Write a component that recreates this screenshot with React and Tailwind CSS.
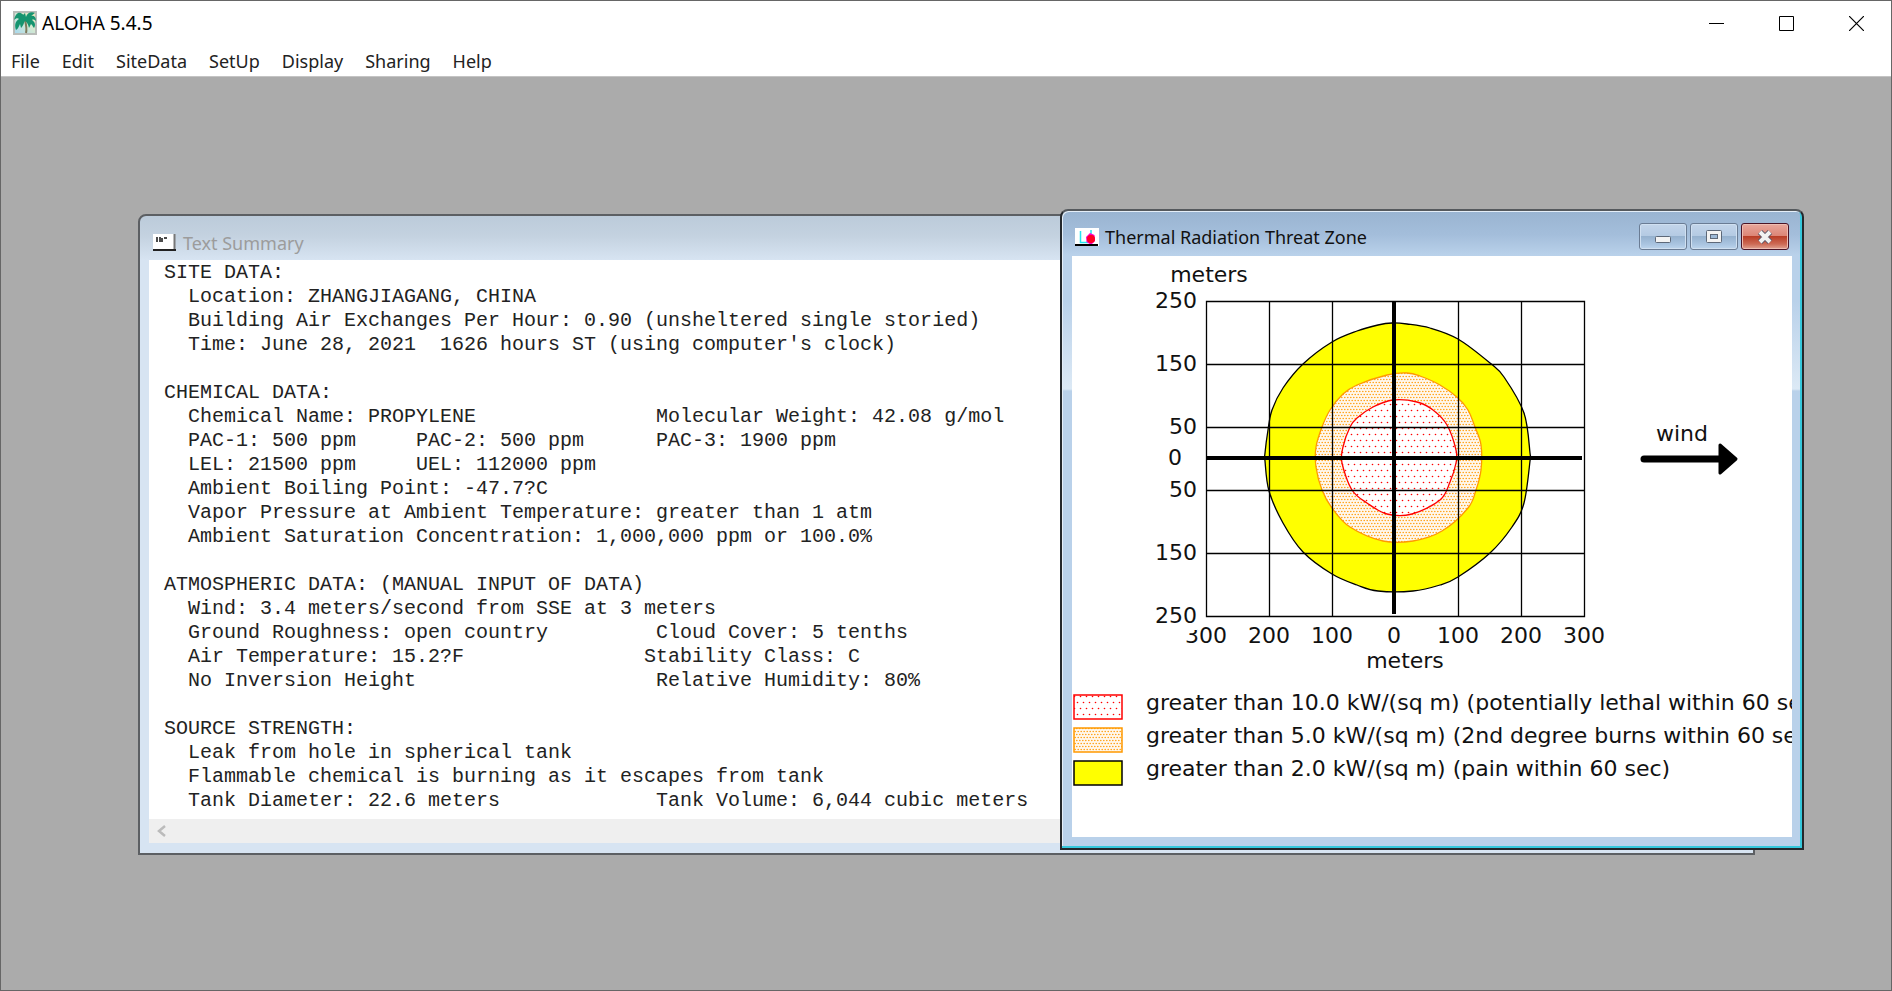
import React from "react";

const MENU = ["File", "Edit", "SiteData", "SetUp", "Display", "Sharing", "Help"];

const pad = (text, column) => text.padEnd(column, " ");

const SUMMARY = [
  "SITE DATA:",
  "  Location: ZHANGJIAGANG, CHINA",
  "  Building Air Exchanges Per Hour: 0.90 (unsheltered single storied)",
  "  Time: June 28, 2021  1626 hours ST (using computer's clock)",
  "",
  "CHEMICAL DATA:",
  pad("  Chemical Name: PROPYLENE", 41) + "Molecular Weight: 42.08 g/mol",
  pad(pad("  PAC-1: 500 ppm", 21) + "PAC-2: 500 ppm", 41) + "PAC-3: 1900 ppm",
  pad("  LEL: 21500 ppm", 21) + "UEL: 112000 ppm",
  "  Ambient Boiling Point: -47.7?C",
  "  Vapor Pressure at Ambient Temperature: greater than 1 atm",
  "  Ambient Saturation Concentration: 1,000,000 ppm or 100.0%",
  "",
  "ATMOSPHERIC DATA: (MANUAL INPUT OF DATA)",
  "  Wind: 3.4 meters/second from SSE at 3 meters",
  pad("  Ground Roughness: open country", 41) + "Cloud Cover: 5 tenths",
  pad("  Air Temperature: 15.2?F", 40) + "Stability Class: C",
  pad("  No Inversion Height", 41) + "Relative Humidity: 80%",
  "",
  "SOURCE STRENGTH:",
  "  Leak from hole in spherical tank",
  "  Flammable chemical is burning as it escapes from tank",
  pad("  Tank Diameter: 22.6 meters", 41) + "Tank Volume: 6,044 cubic meters",
].join("\n");

const LEGEND = [
  { fill: "url(#redDots)", stroke: "#ff0000", text: "greater than 10.0 kW/(sq m) (potentially lethal within 60 sec)" },
  { fill: "url(#orangeDots)", stroke: "#ff9900", text: "greater than 5.0 kW/(sq m) (2nd degree burns within 60 sec)" },
  { fill: "#ffff00", stroke: "#000000", text: "greater than 2.0 kW/(sq m) (pain within 60 sec)" },
];

function PalmIcon() {
  return (
    <svg width="24" height="24" viewBox="0 0 24 24" aria-hidden="true">
      <defs>
        <linearGradient id="sky" x1="0" y1="1" x2="1" y2="0">
          <stop offset="0" stopColor="#a5d8f0" />
          <stop offset="0.6" stopColor="#d9ebcf" />
          <stop offset="1" stopColor="#f0e3b8" />
        </linearGradient>
      </defs>
      <rect x="1" y="1" width="22" height="22" fill="url(#sky)" stroke="#b9bdb9" strokeWidth="2" />
      <path d="M12 9 C13 13 14 18 13 22" fill="none" stroke="#7d7a5c" strokeWidth="2" />
      <path
        d="M12 7 C11 4 8 1 5 2 C3 3 2 5 1 9 C3 7 5 7 6 8 C3 10 1 13 3 19 C5 18 6 15 7 13 L8 17 C11 14 11 11 12 10 C14 11 15 13 16 17 L18 13 C20 15 20 16 21 17 C23 14 22 11 19 9 C20 8 22 9 23 10 C23 6 21 4 18 5 L22 2 C18 0 14 2 13 6 L12 2 L10 4 Z"
        fill="#16946f"
      />
    </svg>
  );
}

function SummaryIcon() {
  return (
    <svg width="24" height="18" viewBox="0 0 24 18" aria-hidden="true">
      <rect width="22" height="15" fill="#fff" />
      <path d="M21.500 0V15" stroke="#777" strokeWidth="2" />
      <path d="M0 16H23" stroke="#222" strokeWidth="2" />
      <path d="M4 3V8M7 3V8M9 4V8M11 4H14" stroke="#111" strokeWidth="1.500" fill="none" />
    </svg>
  );
}

function ZoneIcon() {
  return (
    <svg width="24" height="18" viewBox="0 0 24 18" aria-hidden="true">
      <rect width="24" height="18" fill="#fff" />
      <path d="M5.500 3V14.500H13M16 2V6" stroke="#22e5f0" strokeWidth="1.500" fill="none" />
      <path d="M15 5L19.500 7L20 13L16 17L11.500 14L11 9Z" fill="#ff00c8" />
      <circle cx="16" cy="11" r="4" fill="#ff0022" />
      <path d="M0 17H23" stroke="#000" strokeWidth="2" />
    </svg>
  );
}

function CaptionButton({ label, danger, children }) {
  return (
    <button
      type="button"
      aria-label={label}
      className={
        danger
          ? "flex h-[27px] w-12 items-center justify-center rounded-[3px] border border-[#4a1426] bg-[linear-gradient(#e8a79c_0%,#dc8576_48%,#b93e27_50%,#cd6a55_80%,#e0a392_100%)] shadow-[inset_0_0_0_1px_#eebdb2]"
          : "flex h-[27px] w-12 items-center justify-center rounded-[3px] border border-[#6a7c94] bg-[linear-gradient(#c3d5ea_0%,#b4cae3_48%,#96b2cf_50%,#a9c4e0_80%,#bdd5ed_100%)] shadow-[inset_0_0_0_1px_#d0e0f1]"
      }
    >
      {children}
    </button>
  );
}

const X_LABELS = [[1206, "300"], [1269, "200"], [1332, "100"], [1394, "0"], [1458, "100"], [1521, "200"], [1584, "300"]];
const Y_LABELS = [[301, "250"], [364, "150"], [427, "50"], [458, "0"], [490, "50"], [553, "150"], [616, "250"]];

const YELLOW_ZONE = [
  [1392, 323], [1378, 325], [1357, 331], [1332, 342], [1303, 364], [1283, 388], [1272, 410], [1268, 430], [1265, 453], [1265, 461],
  [1269, 491], [1283, 523], [1303, 552], [1332, 574], [1357, 585], [1378, 591], [1413, 591], [1440, 585], [1458, 577], [1490, 553],
  [1512, 527], [1524, 503], [1530, 461], [1530, 453], [1524, 413], [1504, 377], [1490, 363], [1458, 339], [1430, 328], [1407, 324],
];
const ORANGE_ZONE = [
  [1407, 373], [1387, 375], [1357, 385], [1343, 394], [1330, 410], [1322, 427], [1316, 447], [1316, 467], [1322, 490], [1332, 508],
  [1350, 527], [1383, 541], [1413, 541], [1442, 531], [1468, 508], [1476, 490], [1481, 470], [1481, 445], [1475, 427], [1468, 410],
  [1458, 398], [1440, 385], [1420, 376],
];
const RED_ZONE = [
  [1393, 400], [1373, 407], [1357, 418], [1350, 427], [1343, 447], [1342, 463], [1352, 490], [1367, 503], [1387, 514], [1412, 514],
  [1440, 500], [1450, 482], [1456, 463], [1456, 450], [1447, 425], [1433, 410], [1417, 402],
];

// Closed Catmull-Rom curve through the contour points.
function contour(points) {
  const n = points.length;
  let d = `M${points[0].join(" ")}`;
  for (let i = 0; i < n; i += 1) {
    const [a, b, c, e] = [points[(i + n - 1) % n], points[i], points[(i + 1) % n], points[(i + 2) % n]];
    d += `C${b[0] + (c[0] - a[0]) / 6} ${b[1] + (c[1] - a[1]) / 6} ${c[0] - (e[0] - b[0]) / 6} ${c[1] - (e[1] - b[1]) / 6} ${c[0]} ${c[1]}`;
  }
  return `${d}Z`;
}

function ThreatChart() {
  return (
    <svg
      className="block h-[424px] w-[720px]"
      viewBox="1072 256 720 424"
      role="img"
      aria-label="Thermal radiation threat zone"
      fontFamily='"DejaVu Sans", sans-serif'
      fontSize="22"
      fill="#111"
    >
      <defs>
        <pattern id="redDots" width="6" height="12" patternUnits="userSpaceOnUse">
          <rect width="6" height="12" fill="#fff" />
          <circle cx="1.500" cy="2.500" r="0.800" fill="#ff0000" />
          <circle cx="4.500" cy="8.500" r="0.800" fill="#ff0000" />
        </pattern>
        <pattern id="orangeDots" width="3" height="6" patternUnits="userSpaceOnUse">
          <rect width="3" height="6" fill="#fff8ee" />
          <circle cx="0.800" cy="1.500" r="0.750" fill="#ff9900" />
          <circle cx="2.200" cy="4.500" r="0.750" fill="#ff9900" />
        </pattern>
      </defs>
      <path fill="#ffff00" stroke="#000" strokeWidth="1.300" d={contour(YELLOW_ZONE)} />
      <path fill="url(#orangeDots)" stroke="#ff9900" strokeWidth="1.300" d={contour(ORANGE_ZONE)} />
      <path fill="url(#redDots)" stroke="#ff0000" strokeWidth="1.300" d={contour(RED_ZONE)} />
      <path
        fill="none"
        stroke="#000"
        strokeWidth="1.300"
        d="M1206.500 301.500H1584.500V616.500H1206.500ZM1269.500 301V616M1332.500 301V616M1458.500 301V616M1521.500 301V616M1206 364.500H1584M1206 427.500H1584M1206 490.500H1584M1206 553.500H1584"
      />
      <path fill="none" stroke="#000" strokeWidth="4" d="M1394 302V614M1206 458H1582" />
      {X_LABELS.map(([x, label]) => (
        <text key={x} x={x} y="643" textAnchor="middle">{label}</text>
      ))}
      <rect x="1150" y="620" width="47" height="10" fill="#fff" />
      {Y_LABELS.map(([y, label]) => (
        <text key={y} x={label === "0" ? 1182 : 1197} y={y + 7} textAnchor="end">{label}</text>
      ))}
      <text x="1209" y="282" textAnchor="middle">meters</text>
      <text x="1405" y="668" textAnchor="middle">meters</text>
      <text x="1682" y="441" textAnchor="middle">wind</text>
      <path d="M1644 459H1722" stroke="#000" strokeWidth="7" strokeLinecap="round" />
      <path d="M1720 445L1736 459L1720 473Z" stroke="#000" strokeWidth="3" strokeLinejoin="round" fill="#000" />
    </svg>
  );
}

function SummaryWindow() {
  return (
    <section className="absolute top-[137px] left-[137px] flex w-[1617px] flex-col rounded-t-lg border-2 border-[#5c5f63] bg-[linear-gradient(#bccbda_0px,#c4d2e0_20px,#d7e4f2_44px)] px-[9px] pb-[10px]">
      <header className="flex h-11 items-center gap-[6px] px-1 pt-[10px]">
        <SummaryIcon />
        <h2 className="text-lg leading-6 text-[#9c9c9c]">Text Summary</h2>
      </header>
      <pre className="h-[559px] overflow-hidden bg-white pt-px pl-[15px] font-['Liberation_Mono',monospace] text-xl leading-6 text-[#222]">
        {SUMMARY}
      </pre>
      <div className="flex h-6 items-center bg-[#efefef] px-2">
        <button type="button" aria-label="Scroll left" className="flex">
          <svg width="9" height="12" viewBox="0 0 9 12" aria-hidden="true">
            <path d="M8 1L2 6L8 11" fill="none" stroke="#bbb" strokeWidth="2.500" />
          </svg>
        </button>
      </div>
    </section>
  );
}

function ThreatWindow() {
  return (
    <section className="absolute top-[132px] left-[1059px] flex w-[744px] flex-col rounded-t-lg border-2 border-[#24282c] border-t-[#55595d] bg-[linear-gradient(#99b4d1_0px,#a4bedb_24px,#b9d1ea_44px,#b9d1ea_90px,#dce9f5_178px,#b9d1ea_180px)] px-[10px] pb-[11px] shadow-[inset_-2px_-2px_0_#35c8dc,inset_1px_1px_0_#e4eef8]">
      <header className="flex h-[45px] items-center gap-[6px] px-[3px] pt-[6px]">
        <ZoneIcon />
        <h2 className="flex-1 text-lg leading-6 text-[#111]">Thermal Radiation Threat Zone</h2>
        <div className="flex gap-[3px]">
          <CaptionButton label="Minimize">
            <svg width="18" height="14" viewBox="0 0 18 14" aria-hidden="true">
              <rect x="1.500" y="6.500" width="15" height="6" rx="1" fill="#f3f3f3" stroke="#5d6878" />
            </svg>
          </CaptionButton>
          <CaptionButton label="Maximize">
            <svg width="18" height="16" viewBox="0 0 18 16" aria-hidden="true">
              <rect x="1.500" y="1.500" width="15" height="12" rx="1" fill="#f3f3f3" stroke="#5d6878" />
              <rect x="5.500" y="5.500" width="7" height="4" fill="#9db9d6" stroke="#5d6878" />
            </svg>
          </CaptionButton>
          <CaptionButton label="Close" danger>
            <svg width="18" height="16" viewBox="0 0 18 16" aria-hidden="true">
              <path d="M4 3L14 13M14 3L4 13" stroke="#5a5668" strokeWidth="6" />
              <path d="M4 3L14 13M14 3L4 13" stroke="#f1f1f1" strokeWidth="4" />
            </svg>
          </CaptionButton>
        </div>
      </header>
      <div className="h-[581px] overflow-hidden bg-white font-['DejaVu_Sans',sans-serif] text-[#111]">
        <ThreatChart />
        <ul className="flex flex-col pt-[7px]">
          {LEGEND.map((row) => (
            <li key={row.text} className="flex h-[33px] items-start gap-[23px] pl-px">
              <svg width="50" height="26" className="mt-[7px] shrink-0" aria-hidden="true">
                <rect x="1" y="1" width="48" height="24" fill={row.fill} stroke={row.stroke} strokeWidth="1.500" />
              </svg>
              <span className="text-[22px] leading-8 whitespace-nowrap">{row.text}</span>
            </li>
          ))}
        </ul>
      </div>
    </section>
  );
}

export default function App() {
  return (
    <div className="flex min-h-screen flex-col border border-[#666] bg-[#ababab] font-['Noto_Sans',sans-serif]">
      <header className="border-b border-[#c4c4c4] bg-white pb-px">
        <div className="flex h-11 items-center gap-[5px] pl-3">
          <PalmIcon />
          <h1 className="flex-1 text-[19px] leading-6 text-black">ALOHA 5.4.5</h1>
          <div className="flex">
            <button type="button" aria-label="Minimize" className="flex h-11 w-[70px] items-center justify-center">
              <svg width="15" height="15" viewBox="0 0 15 15" aria-hidden="true"><path d="M0 7.500H15" stroke="#000" /></svg>
            </button>
            <button type="button" aria-label="Maximize" className="flex h-11 w-[70px] items-center justify-center">
              <svg width="15" height="15" viewBox="0 0 15 15" aria-hidden="true"><path d="M.5.5H14.500V14.500H.5Z" fill="none" stroke="#000" /></svg>
            </button>
            <button type="button" aria-label="Close" className="flex h-11 w-[70px] items-center justify-center">
              <svg width="15" height="15" viewBox="0 0 15 15" aria-hidden="true"><path d="M0 0L15 15M15 0L0 15" stroke="#000" strokeWidth="1.200" /></svg>
            </button>
          </div>
        </div>
        <nav className="flex h-[30px] items-center gap-[22px] pt-px pl-[10px]">
          {MENU.map((item) => (
            <button key={item} type="button" className="text-lg leading-6 text-[#222]">{item}</button>
          ))}
        </nav>
      </header>
      <main className="relative flex-1 overflow-hidden">
        <SummaryWindow />
        <ThreatWindow />
      </main>
    </div>
  );
}
